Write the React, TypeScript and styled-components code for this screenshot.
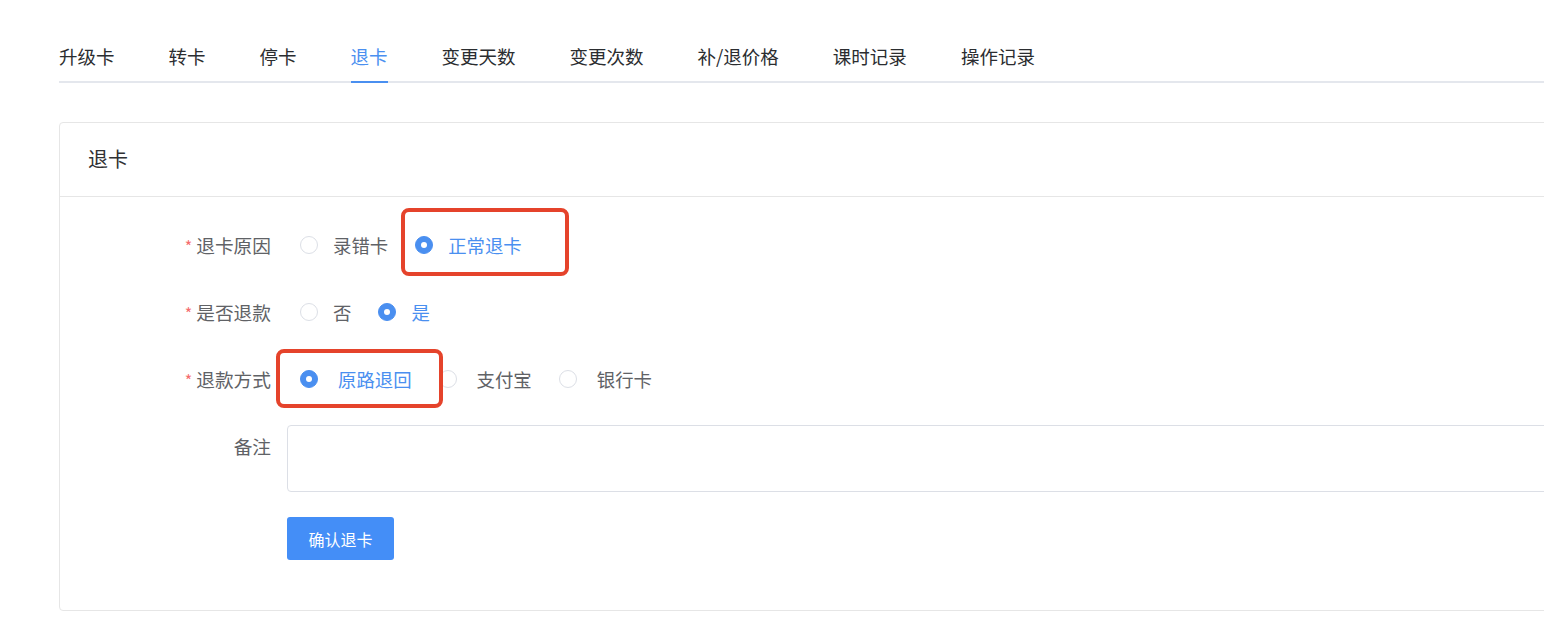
import React from "react";
import styled, { createGlobalStyle } from "styled-components";

const Global = createGlobalStyle`
  html, body { margin: 0; padding: 0; background: #fff; overflow: hidden; }
  body { font-family: "Noto Sans CJK SC", "Noto Sans", sans-serif; }
  * { box-sizing: border-box; }
`;

const Page = styled.div`
  padding: 31px 0 0 59px;
  width: 1700px;
`;

const Tabs = styled.div`
  display: flex;
  border-bottom: 2px solid #e4e7ed;
`;

const Tab = styled.div<{ $active?: boolean }>`
  height: 52px;
  line-height: 50px;
  font-size: 18.5px;
  font-weight: 400;
  margin-right: 54px;
  margin-bottom: -2px;
  color: ${(p) => (p.$active ? "#4a8ff0" : "#2b2d30")};
  border-bottom: 2px solid ${(p) => (p.$active ? "#4a8ff0" : "transparent")};
`;

const Card = styled.div`
  margin-top: 39px;
  width: 1600px;
  border: 1px solid #e6e6e6;
  border-radius: 4px;
`;

const CardHeader = styled.div`
  height: 74px;
  padding-left: 28px;
  padding-bottom: 3px;
  display: flex;
  align-items: center;
  font-size: 20px;
  color: #303133;
  border-bottom: 1px solid #e6e6e6;
`;

const CardBody = styled.div`
  padding: 27px 0 50px;
  display: flex;
  flex-direction: column;
  gap: 25px;
`;

const Row = styled.div<{ $tall?: boolean }>`
  display: flex;
  align-items: flex-start;
  height: ${(p) => (p.$tall ? "67px" : "42px")};
`;

const Label = styled.div<{ $required?: boolean }>`
  width: 227px;
  padding-right: 16px;
  text-align: right;
  font-size: 18.7px;
  line-height: 42px;
  height: 42px;
  color: #606266;
  flex-shrink: 0;
  &::before {
    content: ${(p) => (p.$required ? '"*"' : '""')};
    color: #f56c6c;
    margin-right: 4px;
    font-size: 16px;
  }
`;

const RadioGroup = styled.div`
  display: flex;
  align-items: center;
  height: 42px;
  padding-left: 13px;
  gap: 27px;
`;

const RadioItem = styled.label<{ $gap: number }>`
  position: relative;
  display: inline-flex;
  align-items: center;
  gap: ${(p) => p.$gap}px;
  font-size: 18.4px;
  color: #606266;
`;

const Circle = styled.span<{ $checked?: boolean }>`
  width: 18px;
  height: 18px;
  border-radius: 50%;
  border: 1px solid ${(p) => (p.$checked ? "#4a8ff0" : "#dcdfe6")};
  background: ${(p) => (p.$checked ? "#4a8ff0" : "#fff")};
  display: inline-flex;
  align-items: center;
  justify-content: center;
  &::after {
    content: "";
    width: 6px;
    height: 6px;
    border-radius: 50%;
    background: #fff;
  }
`;

const RadioText = styled.span<{ $checked?: boolean }>`
  color: ${(p) => (p.$checked ? "#4a8ff0" : "#606266")};
`;

const Highlight = styled.span<{ $t: number; $r: number; $b: number; $l: number }>`
  position: absolute;
  top: ${(p) => p.$t}px;
  right: ${(p) => p.$r}px;
  bottom: ${(p) => p.$b}px;
  left: ${(p) => p.$l}px;
  border: 4px solid #e5432b;
  border-radius: 8px;
  pointer-events: none;
  z-index: 2;
`;

const TextArea = styled.textarea`
  width: 1400px;
  height: 67px;
  border: 1px solid #dcdfe6;
  border-radius: 4px;
  resize: none;
  font-family: inherit;
  font-size: 16px;
  outline: none;
`;

const Button = styled.button`
  margin-left: 227px;
  width: 107px;
  height: 43px;
  border: none;
  border-radius: 3px;
  background: #448ef7;
  color: #fff;
  font-family: inherit;
  font-size: 16px;
  cursor: pointer;
`;

type Opt = {
  text: string;
  checked?: boolean;
  hl?: { t: number; r: number; b: number; l: number };
};

const Radios = ({ opts, gap }: { opts: Opt[]; gap: number }) => (
  <RadioGroup>
    {opts.map((o) => (
      <RadioItem key={o.text} $gap={gap}>
        <Circle $checked={o.checked} />
        <RadioText $checked={o.checked}>{o.text}</RadioText>
        {o.hl && <Highlight $t={o.hl.t} $r={o.hl.r} $b={o.hl.b} $l={o.hl.l} />}
      </RadioItem>
    ))}
  </RadioGroup>
);

const tabs = ["升级卡", "转卡", "停卡", "退卡", "变更天数", "变更次数", "补/退价格", "课时记录", "操作记录"];

export default function App() {
  return (
    <>
      <Global />
      <Page>
        <Tabs>
          {tabs.map((t) => (
            <Tab key={t} $active={t === "退卡"}>
              {t}
            </Tab>
          ))}
        </Tabs>
        <Card>
          <CardHeader>退卡</CardHeader>
          <CardBody>
            <Row>
              <Label $required>退卡原因</Label>
              <Radios
                gap={15}
                opts={[
                  { text: "录错卡" },
                  { text: "正常退卡", checked: true, hl: { t: -24, r: -47, b: -18, l: -14 } },
                ]}
              />
            </Row>
            <Row>
              <Label $required>是否退款</Label>
              <Radios gap={15} opts={[{ text: "否" }, { text: "是", checked: true }]} />
            </Row>
            <Row>
              <Label $required>退款方式</Label>
              <Radios
                gap={20}
                opts={[
                  { text: "原路退回", checked: true, hl: { t: -17, r: -31, b: -16, l: -24 } },
                  { text: "支付宝" },
                  { text: "银行卡" },
                ]}
              />
            </Row>
            <Row $tall>
              <Label>备注</Label>
              <TextArea />
            </Row>
            <Button>确认退卡</Button>
          </CardBody>
        </Card>
      </Page>
    </>
  );
}
